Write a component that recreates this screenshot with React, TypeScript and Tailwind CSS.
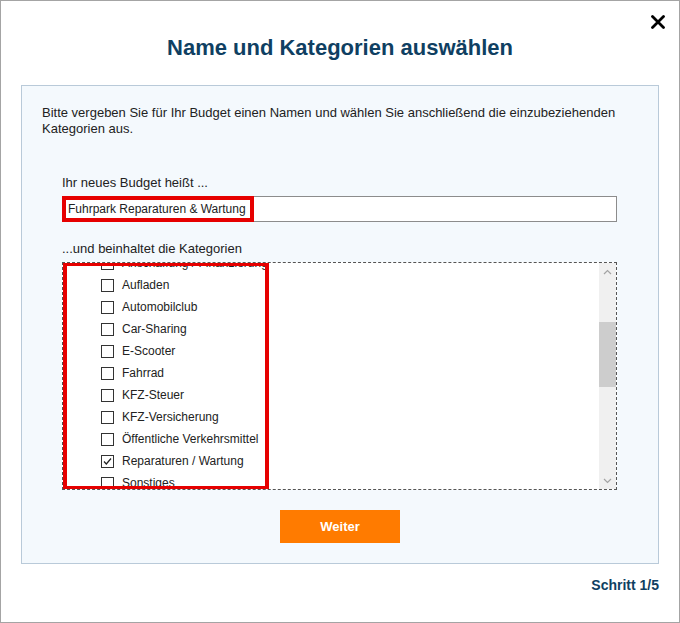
import React from "react";

const categories = [
  { name: "Anschaffung / Finanzierung", checked: false },
  { name: "Aufladen", checked: false },
  { name: "Automobilclub", checked: false },
  { name: "Car-Sharing", checked: false },
  { name: "E-Scooter", checked: false },
  { name: "Fahrrad", checked: false },
  { name: "KFZ-Steuer", checked: false },
  { name: "KFZ-Versicherung", checked: false },
  { name: "Öffentliche Verkehrsmittel", checked: false },
  { name: "Reparaturen / Wartung", checked: true },
  { name: "Sonstiges", checked: false },
];

const Checkbox: React.FC<{ checked: boolean }> = ({ checked }) => (
  <span className="w-[13px] h-[13px] border border-[#333] bg-white shrink-0 flex items-center justify-center">
    {checked && (
      <svg width="11" height="11" viewBox="0 0 11 11">
        <path d="M2 5.5 L4.3 8 L9 2.5" fill="none" stroke="#222" strokeWidth="1.2" />
      </svg>
    )}
  </span>
);

const App: React.FC = () => {
  return (
    <div className="relative w-[680px] h-[623px] border border-[#a4a4a4] bg-white font-['Liberation_Sans',Arial,sans-serif] text-[#222]">
      {/* Close */}
      <button className="absolute right-[14px] top-[14px] w-[14px] h-[14px]">
        <svg width="14" height="14" viewBox="0 0 14 14">
          <path d="M1.5 1.5 L12.5 12.5 M12.5 1.5 L1.5 12.5" stroke="#000" strokeWidth="2.8" strokeLinecap="round" />
        </svg>
      </button>

      {/* Title */}
      <h1 className="mt-[34px] text-center text-[22px] leading-[26px] font-bold text-[#0f3f62]">
        Name und Kategorien auswählen
      </h1>

      {/* Panel */}
      <div className="mx-[20px] mt-[24px] border border-[#b9cad9] bg-[#f4f9fd] pb-[20px]">
        <p className="pt-[19px] pl-[20px] pr-[20px] text-[13px] leading-[16px]">
          Bitte vergeben Sie für Ihr Budget einen Namen und wählen Sie anschließend die einzubeziehenden Kategorien aus.
        </p>

        <div className="pl-[40px] pr-[41px]">
          <div className="mt-[38px] text-[13px] leading-[16px]">Ihr neues Budget heißt ...</div>
          <div className="relative mt-[5px] h-[26px] border border-[#8c8c8c] bg-white flex items-center pl-[5px] text-[12px]">
            Fuhrpark Reparaturen &amp; Wartung
            <div className="absolute -left-px -top-px w-[192px] h-[26px] border-4 border-[#e60000]" />
          </div>

          <div className="mt-[19px] text-[13px] leading-[16px]">...und beinhaltet die Kategorien</div>
          <div className="relative mt-[5px] h-[228px] border border-dashed border-[#555] bg-white flex overflow-hidden">
            <ul className="flex-1 -mt-[11px] pl-[38px]">
              {categories.map((c) => (
                <li key={c.name} className="h-[22px] flex items-center gap-[8px] text-[12px] whitespace-nowrap">
                  <Checkbox checked={c.checked} />
                  <span>{c.name}</span>
                </li>
              ))}
            </ul>
            {/* Scrollbar */}
            <div className="w-[17px] bg-[#f0f0f0] flex flex-col">
              <div className="h-[17px] flex items-center justify-center">
                <svg width="9" height="6" viewBox="0 0 9 6">
                  <path d="M1 5 L4.5 1.5 L8 5" fill="none" stroke="#a3a3a3" strokeWidth="1.2" />
                </svg>
              </div>
              <div className="flex-1 pt-[42px]">
                <div className="h-[65px] bg-[#cdcdcd]" />
              </div>
              <div className="h-[17px] flex items-center justify-center">
                <svg width="9" height="6" viewBox="0 0 9 6">
                  <path d="M1 1 L4.5 4.5 L8 1" fill="none" stroke="#a3a3a3" strokeWidth="1.2" />
                </svg>
              </div>
            </div>
            <div className="absolute left-0 -top-px w-[206px] h-[228px] border-4 border-[#e60000]" />
          </div>
        </div>

        <div className="mt-[20px] flex justify-center">
          <button className="w-[120px] h-[33px] bg-[#ff7b00] text-white text-[13px] font-bold">Weiter</button>
        </div>
      </div>

      <div className="mt-[13px] pr-[20px] text-right text-[14px] leading-[16px] font-bold text-[#0f3f62]">
        Schritt 1/5
      </div>
    </div>
  );
};

export default App;
